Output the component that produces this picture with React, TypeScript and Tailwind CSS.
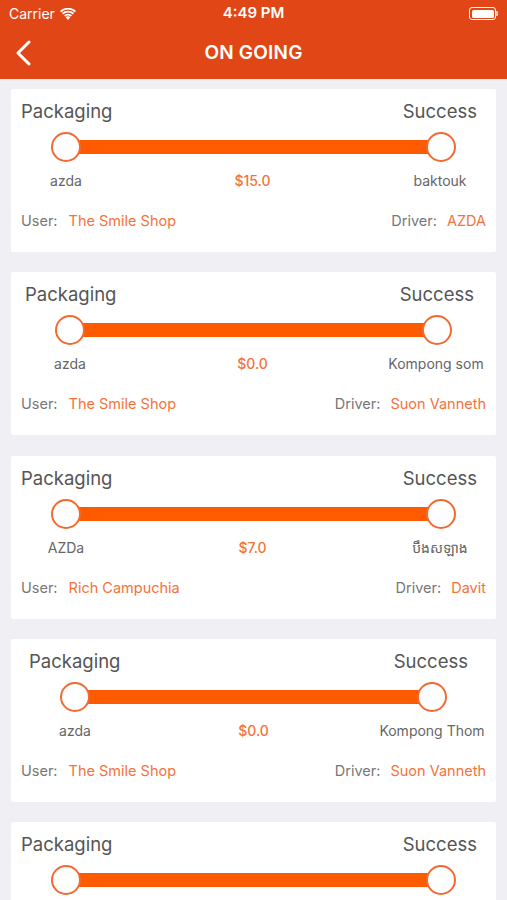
import React from "react";

type Order = {
  from: string;
  to: string;
  price: string;
  user: string;
  driver: string;
  headPad: string;
  trackPad: string;
  labelCols: string;
};

const orders: Order[] = [
  {
    from: "azda",
    to: "baktouk",
    price: "$15.0",
    user: "The Smile Shop",
    driver: "AZDA",
    headPad: "pl-[10px] pr-[19px]",
    trackPad: "px-[40px]",
    labelCols: "grid-cols-[110px_1fr_112px]",
  },
  {
    from: "azda",
    to: "Kompong som",
    price: "$0.0",
    user: "The Smile Shop",
    driver: "Suon Vanneth",
    headPad: "pl-[14px] pr-[22px]",
    trackPad: "px-[44px]",
    labelCols: "grid-cols-[118px_1fr_120px]",
  },
  {
    from: "AZDa",
    to: "បឹងសឡាង",
    price: "$7.0",
    user: "Rich Campuchia",
    driver: "Davit",
    headPad: "pl-[10px] pr-[19px]",
    trackPad: "px-[40px]",
    labelCols: "grid-cols-[110px_1fr_112px]",
  },
  {
    from: "azda",
    to: "Kompong Thom",
    price: "$0.0",
    user: "The Smile Shop",
    driver: "Suon Vanneth",
    headPad: "pl-[18px] pr-[28px]",
    trackPad: "px-[49px]",
    labelCols: "grid-cols-[128px_1fr_128px]",
  },
  {
    from: "azda",
    to: "baktouk",
    price: "$15.0",
    user: "The Smile Shop",
    driver: "AZDA",
    headPad: "pl-[10px] pr-[19px]",
    trackPad: "px-[40px]",
    labelCols: "grid-cols-[110px_1fr_112px]",
  },
];

const font = "font-['Inter','Noto_Sans','Noto_Sans_Khmer',sans-serif]";

function Dot() {
  return (
    <div className="relative z-10 w-[30px] h-[30px] shrink-0 rounded-full bg-white border-2 border-[#f26a32]" />
  );
}

function OrderCard({ order }: { order: Order }) {
  return (
    <div className="bg-white mx-[11px] h-[163px] rounded-[2px] pt-[10px] shrink-0">
      <div
        className={`flex justify-between text-[18.5px] leading-[24px] text-[#555] ${order.headPad}`}
      >
        <span>Packaging</span>
        <span>Success</span>
      </div>
      <div className={`flex items-center mt-[9px] ${order.trackPad}`}>
        <Dot />
        <div className="flex-1 h-[14px] bg-[#fe5a00] -mx-[2px]" />
        <Dot />
      </div>
      <div
        className={`grid ${order.labelCols} mt-[9px] text-[14px] leading-[20px]`}
      >
        <span className="text-center text-[#666]">{order.from}</span>
        <span className="text-center text-[#f4733a] font-medium">
          {order.price}
        </span>
        <span className="text-center text-[#666]">{order.to}</span>
      </div>
      <div className="flex justify-between px-[10px] mt-[20px] text-[14.5px] leading-[20px]">
        <div className="flex gap-[11px]">
          <span className="text-[#777]">User:</span>
          <span className="text-[#f4733a]">{order.user}</span>
        </div>
        <div className="flex gap-[10px]">
          <span className="text-[#777]">Driver:</span>
          <span className="text-[#f4733a]">{order.driver}</span>
        </div>
      </div>
    </div>
  );
}

export default function App() {
  return (
    <div className={`w-[507px] h-[900px] overflow-hidden bg-[#efeff4] flex flex-col ${font}`}>
      <div className="bg-[#e14716] text-white shrink-0">
        {/* status bar */}
        <div className="h-[27px] flex items-center justify-between px-[9px] relative">
          <div className="flex items-center gap-[5px] text-[14px]">
            <span>Carrier</span>
            <svg width="16" height="12" viewBox="0 0 16 12" fill="white">
              <path d="M8 12 L5.6 9.2 A3.6 3.6 0 0 1 10.4 9.2 Z" />
              <path d="M3.9 7.3 A6.2 6.2 0 0 1 12.1 7.3 L10.9 8.6 A4.5 4.5 0 0 0 5.1 8.6 Z" />
              <path d="M1.9 5.1 A9 9 0 0 1 14.1 5.1 L12.9 6.4 A7.3 7.3 0 0 0 3.1 6.4 Z" />
              <path d="M0 2.9 A11.8 11.8 0 0 1 16 2.9 L14.8 4.2 A10.1 10.1 0 0 0 1.2 4.2 Z" />
            </svg>
          </div>
          <span className="absolute left-1/2 -translate-x-1/2 text-[15px] font-semibold">
            4:49 PM
          </span>
          <div className="flex items-center">
            <div className="w-[27px] h-[13px] rounded-[3px] border border-white p-[1.5px]">
              <div className="w-full h-full rounded-[1.5px] bg-white" />
            </div>
            <div className="w-[2px] h-[5px] bg-white/70 rounded-r-[1px]" />
          </div>
        </div>
        {/* nav bar */}
        <div className="h-[52px] flex items-center justify-center relative">
          <svg
            className="absolute left-[15px] top-[13px]"
            width="18"
            height="26"
            viewBox="0 0 18 26"
            fill="none"
            stroke="white"
            strokeWidth="3"
            strokeLinecap="round"
            strokeLinejoin="round"
          >
            <polyline points="14,2 3,13 14,24" />
          </svg>
          <span className="text-[19px] font-semibold tracking-[0.2px]">ON GOING</span>
        </div>
      </div>
      <div className="flex flex-col gap-[20.25px] pt-[10px]">
        {orders.map((o, i) => (
          <OrderCard key={i} order={o} />
        ))}
      </div>
    </div>
  );
}
